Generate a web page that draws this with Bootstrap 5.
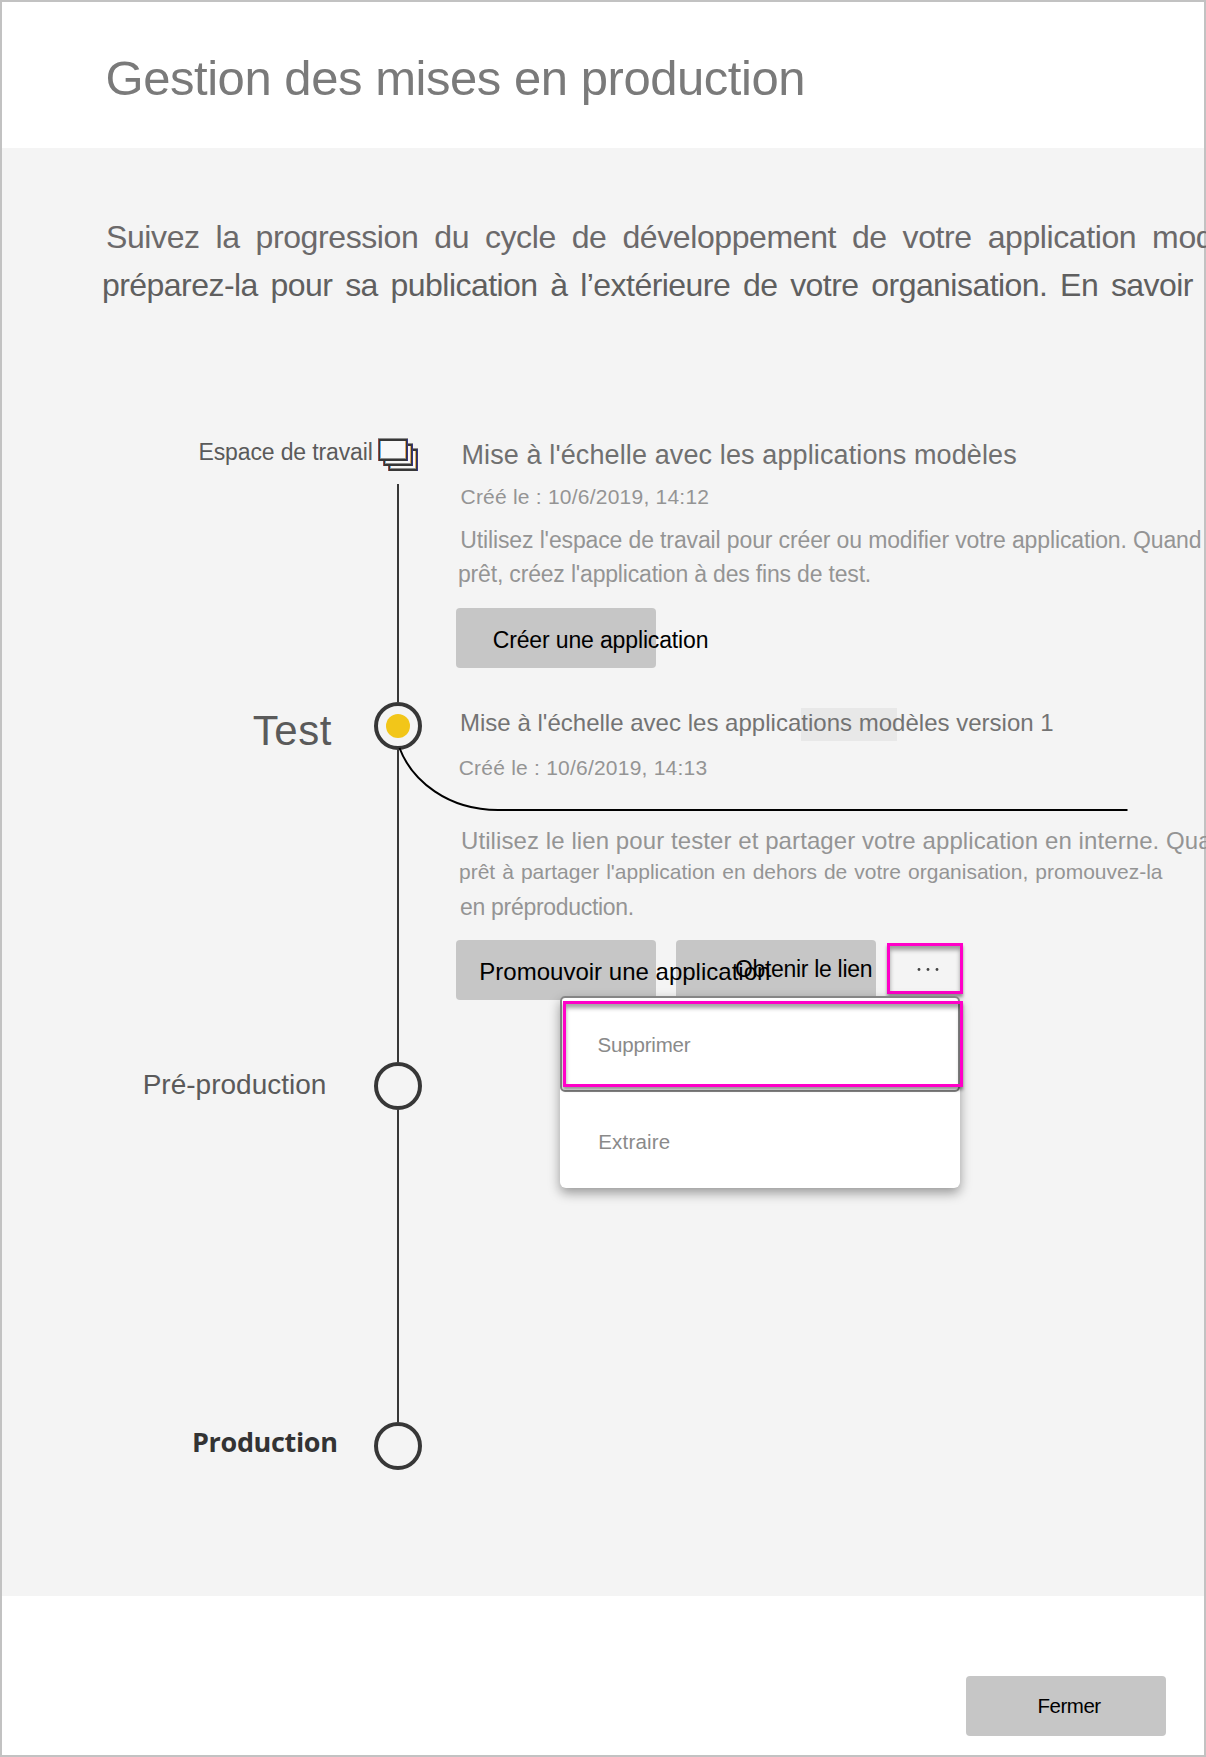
<!DOCTYPE html>
<html lang="fr">
<head>
<meta charset="utf-8">
<meta name="viewport" content="width=device-width, initial-scale=1">
<title>Gestion des mises en production</title>
<link rel="stylesheet" href="https://cdn.jsdelivr.net/npm/bootstrap@5.3.0/dist/css/bootstrap.min.css">
<style>
  body { font-family: "Liberation Sans", Arial, sans-serif; background: #fff; overflow: hidden; }
  .dialog-frame { width: 1206px; height: 1757px; border: 2px solid #c2c2c2; }
  .dialog-head { height: 146px; padding: 49px 0 0 103.5px; }
  .dialog-head h1 { font-size: 49px; line-height: 54px; letter-spacing: -.455px; color: #7a7a7a; white-space: nowrap; }
  .dialog-main { height: 1448px; background: #f4f4f4; }
  .dialog-foot { padding: 80px 38px 0 0; }
  .tline { white-space: nowrap; }

  .intro { height: 272px; padding-top: 71px; font-size: 32px; line-height: 36px; }
  .intro-a { margin-left: 104px; letter-spacing: -.4px; word-spacing: 7.4px; color: #6b696a; }
  .intro-b { margin: 12px 0 0 100px; letter-spacing: -.55px; word-spacing: 4.4px; color: #5f5f5f; }

  .stage { height: 360px; }
  .stage-workspace { height: 270px; }
  .stage-production { height: 186px; }
  .stage-label { width: 372px; color: #5a5a5a; }
  .stage-rail { width: 48px; }
  .stage-body { margin-left: 34px; width: 748px; }
  .rail-line { width: 2px; background: #373737; }
  .node { width: 48px; height: 48px; border: 4px solid #373737; }
  .node-dot { width: 24px; height: 24px; background: #f2c619; }
  .layers { margin: 18px 0 13px 4px; }

  .lbl-workspace { padding: 15px 0 0 196.5px; font-size: 23px; line-height: 34px; letter-spacing: -.13px; }
  .lbl-test { padding: 18px 0 0 250.7px; font-size: 42px; line-height: 46px; letter-spacing: .6px; }
  .lbl-preprod { padding: 19px 0 0 140.7px; font-size: 28px; line-height: 31px; }
  .lbl-prod { padding: 13px 0 0 190px; font: 700 27px/38px "Open Sans", "Noto Sans", sans-serif; letter-spacing: -.35px; color: #333; }

  .name-a { margin-top: 19px; padding-left: 5.5px; font-size: 27px; line-height: 32px; letter-spacing: .117px; color: #707070; }
  .name-b { margin-top: 16px; padding-left: 4px; font-size: 24px; line-height: 33px; letter-spacing: .015px; color: #737373; }
  .stamp { padding-left: 4.5px; font-size: 21px; line-height: 27px; letter-spacing: .225px; color: #949494; }
  .stamp-test { margin-top: 15px; padding-left: 2.7px; }
  .hint { font-size: 23px; line-height: 34px; color: #949494; }
  .hint-a { margin-top: 13px; padding-left: 4.3px; letter-spacing: -.13px; }
  .hint-b { padding-left: 2px; letter-spacing: -.18px; }
  .hint-c { margin-top: 43px; padding-left: 5px; font-size: 24px; line-height: 33px; letter-spacing: .085px; }
  .hint-d { margin-top: 1px; padding-left: 3px; font-size: 21px; line-height: 27px; word-spacing: 1.2px; }
  .hint-e { margin-top: 5px; padding-left: 4px; letter-spacing: -.3px; }
  .tint { left: 345px; top: 18px; width: 96px; height: 33px; background: #e8e8e8; }

  .btn-flat { width: 200px; height: 60px; padding: 0; border: 0; border-radius: 4px; background: #c6c6c6; color: #000; text-align: left; white-space: nowrap; display: flex; align-items: flex-start; }
  .btn-create { margin-top: 17px; padding: 19px 0 0 36.7px; font-size: 23px; line-height: 26px; letter-spacing: -.14px; }
  .btn-promote { z-index: 1; padding: 18px 0 0 23.3px; font-size: 24px; line-height: 27px; letter-spacing: .01px; }
  .btn-link-get { margin-left: 20px; padding: 16px 0 0 59px; font-size: 23px; line-height: 26px; letter-spacing: -.32px; }
  .btn-close-dlg { padding: 19px 0 0 71.4px; font-size: 20.5px; line-height: 22px; letter-spacing: -.45px; }

  .hot { border: 3px solid #ff00c8; box-shadow: 0 3px 3px rgba(0,0,0,.4), inset 0 4px 4px rgba(0,0,0,.36); }
  .more { margin: 3px 0 0 11px; width: 76px; height: 51px; }
  .options { left: 104px; top: 306px; width: 400px; height: 192px; border-radius: 6px; background: #fff; box-shadow: 0 5px 12px rgba(0,0,0,.38); z-index: 2; color: #8a8a8a; }
  .option { height: 96px; font-size: 20.5px; line-height: 22px; }
  .option-on { border: 2px solid #858585; border-radius: 5px; padding: 36px 0 0 35.5px; letter-spacing: -.18px; }
  .option-off { padding: 39px 0 0 38.2px; letter-spacing: .2px; }
  .options .hot { left: 3px; top: 5px; width: 400px; height: 86px; }
  .branch { left: 24px; top: 58px; overflow: visible; }
</style>
<script src="https://cdn.jsdelivr.net/npm/bootstrap@5.3.0/dist/js/bootstrap.bundle.min.js"></script>
</head>
<body>
<div class="dialog-frame d-flex flex-column">
  <header class="dialog-head flex-shrink-0"><h1 class="m-0 fw-normal">Gestion des mises en production</h1></header>

  <main class="dialog-main flex-shrink-0">
    <div class="intro tline">
      <div class="intro-a">Suivez la progression du cycle de développement de votre application modèle</div>
      <div class="intro-b">préparez-la pour sa publication à l’extérieure de votre organisation. En savoir</div>
    </div>

    <section class="stage stage-workspace d-flex">
      <div class="stage-label lbl-workspace tline flex-shrink-0">Espace de travail</div>
      <div class="stage-rail d-flex flex-column flex-shrink-0">
        <svg class="layers flex-shrink-0" width="41" height="33" viewBox="0 0 41 33" shape-rendering="crispEdges">
          <defs>
            <g id="sheet">
              <path fill="#8d8d8d" d="M0 0h30v23H0z"/>
              <path fill="#373737" d="M0 1h30v22H0z"/>
              <path fill="#8d8d8d" d="M2 3h26v18H2z"/>
              <path fill="#f8f8f8" d="M2 3h26v17H2z"/>
              <path fill="#9b4a3c" d="M0 1h1v22H0z"/>
              <path fill="#62b4f0" d="M2 3h1v17H2z"/>
              <path fill="#e8a860" d="M27 3h1v17h-1z"/>
              <path fill="#35358a" d="M29 1h1v22h-1z"/>
            </g>
          </defs>
          <use href="#sheet" x="10" y="10"/>
          <use href="#sheet" x="5" y="5"/>
          <use href="#sheet"/>
        </svg>
        <div class="rail-line flex-fill align-self-center"></div>
      </div>
      <div class="stage-body">
        <div class="name-a tline">Mise à l'échelle avec les applications modèles</div>
        <div class="stamp tline mt-2 pt-1">Créé le : 10/6/2019, 14:12</div>
        <div class="hint hint-a tline">Utilisez l'espace de travail pour créer ou modifier votre application. Quand</div>
        <div class="hint hint-b tline">prêt, créez l'application à des fins de test.</div>
        <button type="button" class="btn btn-flat btn-create">Créer une application</button>
      </div>
    </section>

    <section class="stage d-flex">
      <div class="stage-label lbl-test tline flex-shrink-0">Test</div>
      <div class="stage-rail d-flex flex-column align-items-center flex-shrink-0 position-relative">
        <svg class="branch position-absolute" width="732" height="64" fill="none" stroke="#000" stroke-width="2"><path d="M1.500 0C14 33 50 62 100 62H729.500"/></svg>
        <div class="rail-line pt-2 pb-1"></div>
        <div class="node rounded-circle d-flex align-items-center justify-content-center flex-shrink-0"><div class="node-dot rounded-circle"></div></div>
        <div class="rail-line flex-fill"></div>
      </div>
      <div class="stage-body position-relative">
        <div class="tint position-absolute"></div>
        <div class="name-b tline position-relative">Mise à l'échelle avec les applications modèles version 1</div>
        <div class="stamp stamp-test tline">Créé le : 10/6/2019, 14:13</div>
        <div class="hint hint-c tline">Utilisez le lien pour tester et partager votre application en interne. Quand</div>
        <div class="hint hint-d tline">prêt à partager l'application en dehors de votre organisation, promouvez-la</div>
        <div class="hint hint-e tline">en préproduction.</div>
        <div class="d-flex mt-3">
          <button type="button" class="btn btn-flat btn-promote position-relative flex-shrink-0">Promouvoir une application</button>
          <button type="button" class="btn btn-flat btn-link-get flex-shrink-0">Obtenir le lien</button>
          <div class="more hot d-flex align-items-center flex-shrink-0">
            <svg width="70" height="6" fill="#444"><circle cx="29" cy="3.500" r="1.400"/><circle cx="38" cy="3.500" r="1.400"/><circle cx="47" cy="3.500" r="1.400"/></svg>
          </div>
        </div>
        <div class="options position-absolute">
          <div class="option option-on">Supprimer</div>
          <div class="option option-off">Extraire</div>
          <div class="hot position-absolute"></div>
        </div>
      </div>
    </section>

    <section class="stage d-flex">
      <div class="stage-label lbl-preprod tline flex-shrink-0">Pré-production</div>
      <div class="stage-rail d-flex flex-column align-items-center flex-shrink-0">
        <div class="rail-line pt-2 pb-1"></div>
        <div class="node rounded-circle flex-shrink-0"></div>
        <div class="rail-line flex-fill"></div>
      </div>
    </section>

    <section class="stage stage-production d-flex">
      <div class="stage-label lbl-prod tline flex-shrink-0">Production</div>
      <div class="stage-rail d-flex flex-column align-items-center flex-shrink-0">
        <div class="rail-line pt-2 pb-1"></div>
        <div class="node rounded-circle flex-shrink-0"></div>
      </div>
    </section>
  </main>

  <footer class="dialog-foot d-flex justify-content-end">
    <button type="button" class="btn btn-flat btn-close-dlg">Fermer</button>
  </footer>
</div>
</body>
</html>
